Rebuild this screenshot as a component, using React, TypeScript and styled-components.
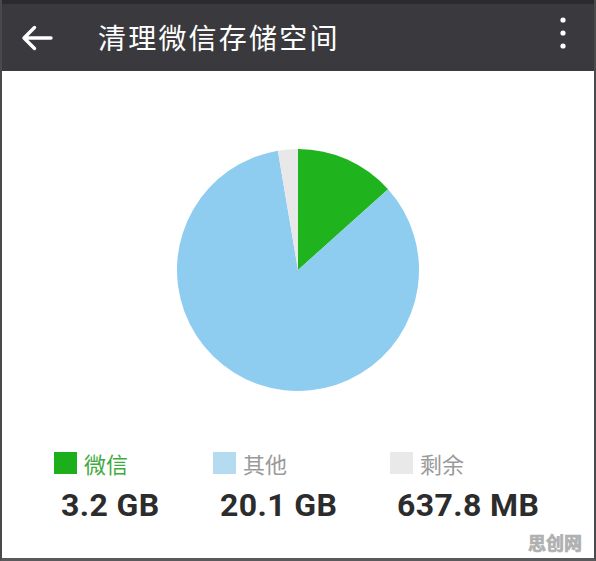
import React from 'react';
import styled, { createGlobalStyle } from 'styled-components';

const GlobalStyle = createGlobalStyle`
  html, body {
    margin: 0;
    padding: 0;
    background: #ffffff;
  }
  body {
    font-family: Roboto, "Noto Sans CJK SC", sans-serif;
  }
`;

// ============================================================================
// Data
// ============================================================================

type Slice = {
  label: string;
  value: string;
  size: number;
  pie: string;
  swatch: string;
  text: string;
};

const slices: Slice[] = [
  { label: '微信', value: '3.2 GB', size: 3.2, pie: '#1fb31e', swatch: '#1dae1c', text: '#3fab3f' },
  { label: '其他', value: '20.1 GB', size: 20.1, pie: '#8ecdf0', swatch: '#b5dbf1', text: '#9a9a9a' },
  { label: '剩余', value: '637.8 MB', size: 0.6378, pie: '#e8e8e8', swatch: '#e9e9e9', text: '#9a9a9a' },
];

// ============================================================================
// Layout
// ============================================================================

const Screen = styled.div`
  position: relative;
  width: 596px;
  height: 561px;
  box-sizing: border-box;
  border-left: 2px solid #4a4a4c;
  border-right: 2px solid #4a4a4c;
  border-bottom: 3px solid #5a5a5c;
  background: #ffffff;
  display: flex;
  flex-direction: column;
  overflow: hidden;
`;

const Toolbar = styled.header`
  height: 71px;
  box-sizing: border-box;
  border-top: 4px solid #2b2b2e;
  background: #3a3a3e;
  display: flex;
  align-items: center;
  padding-left: 19px;
  padding-right: 26px;
`;

const Title = styled.h1`
  margin: 0 0 0 45px;
  font-family: "Noto Sans CJK SC", sans-serif;
  font-size: 28px;
  font-weight: 400;
  letter-spacing: 2.2px;
  color: #ffffff;
  line-height: 1;
  padding-bottom: 1px;
`;

const Menu = styled.svg`
  margin-left: auto;
  align-self: stretch;
`;

const ChartArea = styled.div`
  display: flex;
  justify-content: center;
  padding-top: 77px;
`;

const Legend = styled.div`
  display: grid;
  grid-template-columns: 159px 177px 1fr;
  padding-left: 52px;
  margin-top: 60px;
`;

const Column = styled.div`
  display: flex;
  flex-direction: column;
`;

const Key = styled.div`
  display: flex;
  align-items: center;
  height: 22px;
`;

const Swatch = styled.span<{ $color: string }>`
  width: 23px;
  height: 22px;
  background: ${({ $color }) => $color};
`;

const KeyLabel = styled.span<{ $color: string }>`
  margin-left: 7px;
  font-family: "Noto Sans CJK SC", sans-serif;
  font-size: 22px;
  line-height: 1;
  color: ${({ $color }) => $color};
`;

const Value = styled.div`
  margin: 15px 0 0 7px;
  font-family: Roboto, sans-serif;
  font-size: 32px;
  font-weight: 700;
  line-height: 1;
  letter-spacing: 0.4px;
  color: #2c2c2c;
`;

const Watermark = styled.span`
  position: absolute;
  right: 12px;
  bottom: 3px;
  font-family: "Noto Sans CJK SC", sans-serif;
  font-size: 18px;
  font-weight: 700;
  color: #b0b0b0;
  -webkit-text-stroke: 0.7px #b0b0b0;
`;

// ============================================================================
// Pieces
// ============================================================================

const BackArrow = () => (
  <svg width="32" height="30" viewBox="0 0 32 30">
    <path
      d="M3 15 H30 M3 15 L13.5 4.5 M3 15 L13.5 25.5"
      stroke="#ffffff"
      strokeWidth="3.4"
      fill="none"
      strokeLinecap="round"
      strokeLinejoin="round"
    />
  </svg>
);

const Pie = ({ data, r }: { data: Slice[]; r: number }) => {
  const total = data.reduce((s, d) => s + d.size, 0);
  const c = r + 1;
  let start = 0;
  const point = (a: number) => {
    const rad = (a * Math.PI) / 180;
    return `${c + r * Math.sin(rad)} ${c - r * Math.cos(rad)}`;
  };
  return (
    <svg width={c * 2} height={c * 2} viewBox={`0 0 ${c * 2} ${c * 2}`}>
      {data.map((d) => {
        const sweep = (d.size / total) * 360;
        const end = start + sweep;
        const large = sweep > 180 ? 1 : 0;
        const path = `M${c} ${c} L${point(start)} A${r} ${r} 0 ${large} 1 ${point(end)} Z`;
        start = end;
        return <path key={d.label} d={path} fill={d.pie} />;
      })}
    </svg>
  );
};

export default function App() {
  return (
    <>
      <GlobalStyle />
      <Screen>
        <Toolbar>
          <BackArrow />
          <Title>清理微信存储空间</Title>
          <Menu width="10" viewBox="0 0 10 67">
            <circle cx="5" cy="16" r="2.6" fill="#ffffff" />
            <circle cx="5" cy="29" r="2.6" fill="#ffffff" />
            <circle cx="5" cy="42" r="2.6" fill="#ffffff" />
          </Menu>
        </Toolbar>

        <ChartArea>
          <Pie data={slices} r={121} />
        </ChartArea>

        <Legend>
          {slices.map((s) => (
            <Column key={s.label}>
              <Key>
                <Swatch $color={s.swatch} />
                <KeyLabel $color={s.text}>{s.label}</KeyLabel>
              </Key>
              <Value>{s.value}</Value>
            </Column>
          ))}
        </Legend>

        <Watermark>思创网</Watermark>
      </Screen>
    </>
  );
}
